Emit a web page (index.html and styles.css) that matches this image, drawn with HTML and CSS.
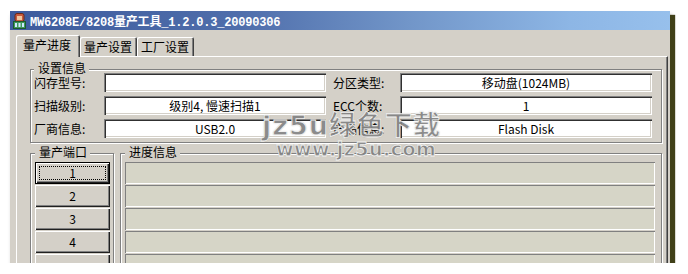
FILE: index.html
```html
<!DOCTYPE html>
<html lang="zh-CN">
<head>
<meta charset="utf-8">
<title>MW6208E/8208量产工具</title>
<link rel="stylesheet" href="styles.css">
</head>
<body>
<div class="screen">
  <div class="window">
    <div class="titlebar">
      <svg class="app-icon" width="13" height="16" viewBox="0 0 13 16">
        <rect x="2" y="0.5" width="9" height="8" rx="2" fill="#c85a3c" stroke="#6a2a1a" stroke-width="1"/>
        <rect x="4" y="3" width="5" height="4" fill="#f0c8a0"/>
        <rect x="0.5" y="8.5" width="12" height="7" fill="#3f9a5a" stroke="#1d5a2e" stroke-width="1"/>
        <rect x="2" y="10" width="2" height="4" fill="#cfe8ff"/>
        <rect x="5.5" y="10" width="2" height="4" fill="#cfe8ff"/>
        <rect x="9" y="10" width="2" height="4" fill="#cfe8ff"/>
      </svg>
      <span class="title">MW6208E/8208量产工具_1.2.0.3_20090306</span>
    </div>
    <div class="client">
      <div class="tabs">
        <div class="tab active">量产进度</div>
        <div class="tab">量产设置</div>
        <div class="tab">工厂设置</div>
      </div>
      <div class="panel">
        <div class="group settings">
          <div class="legend">设置信息</div>
          <div class="fields">
            <span class="lbl">闪存型号:</span><div class="field"></div>
            <span class="lbl lbl-r">分区类型:</span><div class="field">移动盘(1024MB)</div>
            <span class="lbl">扫描级别:</span><div class="field">级别4, 慢速扫描1</div>
            <span class="lbl lbl-r">ECC个数:</span><div class="field">1</div>
            <span class="lbl">厂商信息:</span><div class="field">USB2.0</div>
            <span class="lbl lbl-r">产品信息:</span><div class="field">Flash Disk</div>
          </div>
        </div>
        <div class="lower">
          <div class="group ports">
            <div class="legend">量产端口</div>
            <div class="list">
              <div class="btn default"><span class="focus">1</span></div>
              <div class="btn">2</div>
              <div class="btn">3</div>
              <div class="btn">4</div>
              <div class="btn"></div>
            </div>
          </div>
          <div class="group progress">
            <div class="legend">进度信息</div>
            <div class="list">
              <div class="bar"></div>
              <div class="bar"></div>
              <div class="bar"></div>
              <div class="bar"></div>
              <div class="bar"></div>
            </div>
          </div>
        </div>
      </div>
    </div>
    <div class="watermark">
      <div class="wm-big">jz5u绿色下载</div>
      <div class="wm-small">www.jz5u.com</div>
    </div>
  </div>
</div>
</body>
</html>
```
FILE: styles.css
```css
* { box-sizing: border-box; }
body {
  margin: 0;
  background: #fff;
  font-family: "Noto Sans CJK SC", "Liberation Sans", sans-serif;
  font-size: 12px;
  color: #000;
}
.screen { padding: 11px 0 0 10px; }
.window {
  position: relative;
  width: 660px;
  height: 252px;
  background: #d4d0c8;
  overflow: hidden;
  box-shadow: 6px 3px 1px -1px #404018, 2px 4px 4px rgba(0,0,0,0.35);
}
.titlebar {
  height: 19px;
  display: flex;
  align-items: center;
  gap: 4px;
  padding-left: 3px;
  background: linear-gradient(90deg, #3d5b9d 0%, #4f6eab 35%, #7195c8 60%, #8db6e5 85%, #97c0ec 100%);
  color: #fff;
}
.app-icon { flex: none; }
.title {
  font-family: "Liberation Mono", "Noto Sans CJK SC", monospace;
  font-weight: bold;
  font-size: 12px;
  letter-spacing: -0.2px;
  white-space: nowrap;
}
.client { padding: 5px 0 0 6px; }
.tabs {
  display: flex;
  align-items: flex-end;
  height: 21px;
}
.tab {
  height: 19px;
  line-height: 19px;
  padding: 0 5px 0 4px;
  border-radius: 2px 2px 0 0;
  background: #d4d0c8;
  box-shadow: inset 1px 1px 0 #fff, inset -1px 0 0 #404040, inset -2px 0 0 #808080;
  white-space: nowrap;
}
.tab.active {
  position: relative;
  z-index: 1;
  height: 22px;
  line-height: 20px;
  margin-bottom: -1px;
  padding: 0 9px 0 7px;
}
.panel {
  width: 652px;
  height: 220px;
  border-top: 1px solid #fff;
  border-left: 1px solid #fff;
  border-right: 1px solid #404040;
  box-shadow: inset -1px 0 0 #808080;
  padding: 12px 0 0 13px;
}
.group {
  border: 1px solid #808080;
  box-shadow: inset 1px 1px 0 #fff, 1px 1px 0 #fff;
}
.legend {
  width: fit-content;
  height: 11px;
  line-height: 12px;
  margin-top: -8px;
  padding: 0 3px 0 4px;
  background: #d4d0c8;
  white-space: nowrap;
}
.settings {
  width: 632px;
  padding: 0 0 4px 3px;
}
.fields {
  display: grid;
  grid-template-columns: 70px 222px 74px 252px;
  grid-auto-rows: 19px;
  row-gap: 4px;
}
.lbl { line-height: 20px; white-space: nowrap; }
.lbl-r { padding-left: 7px; }
.field {
  background: #fff;
  box-shadow: inset 1px 1px 0 #808080, inset 2px 2px 0 #303030, inset -1px -1px 0 #fff, inset -2px -2px 0 #d4d0c8;
  text-align: center;
  line-height: 19px;
  white-space: nowrap;
}
.lower {
  display: flex;
  gap: 6px;
  margin-top: 10px;
}
.ports {
  width: 84px;
  height: 130px;
  padding-left: 4px;
}
.progress {
  width: 542px;
  height: 130px;
  padding: 0 6px 0 4px;
}
.list {
  margin-top: 5px;
  display: flex;
  flex-direction: column;
  gap: 1px;
}
.btn {
  width: 75px;
  height: 22px;
  line-height: 22px;
  text-align: center;
  background: #d4d0c8;
  box-shadow: inset 1px 1px 0 #fff, inset -1px -1px 0 #202020, inset -2px -2px 0 #808080;
}
.btn.default {
  border: 1px solid #000;
  display: flex;
  padding: 3px;
}
.focus {
  flex: 1;
  border: 1px dotted #000;
  line-height: 12px;
}
.bar {
  width: 530px;
  height: 22px;
  background: #d6d5c7;
  box-shadow: inset 1px 1px 0 #808080, inset -1px -1px 0 #fff;
}
.watermark {
  position: absolute;
  left: 252px;
  top: 101px;
  color: rgba(140,140,140,0.8);
  -webkit-text-stroke: 0.8px rgba(255,255,255,0.9);
  text-shadow: 0 0 1px rgba(90,90,90,0.7);
  font-family: "DejaVu Sans", "Noto Sans CJK SC", sans-serif;
  font-weight: bold;
  pointer-events: none;
}
.wm-big {
  font-size: 27px;
  line-height: 28px;
  letter-spacing: 1px;
  white-space: nowrap;
}
.wm-small {
  margin-left: 14px;
  font-size: 19px;
  line-height: 18px;
  letter-spacing: 0.5px;
  white-space: nowrap;
}
```
